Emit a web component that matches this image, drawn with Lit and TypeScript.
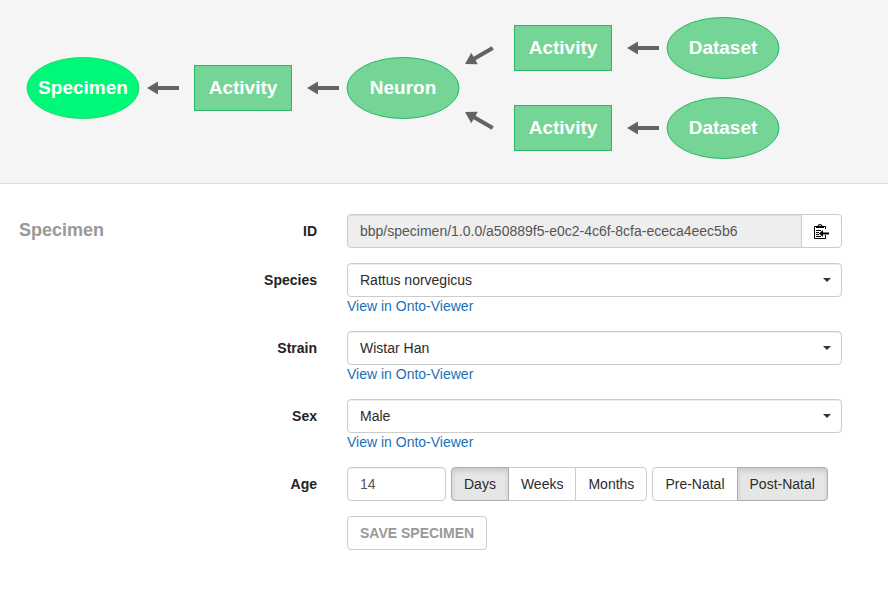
import { LitElement, html, svg, css } from "lit";
import { customElement, property, state } from "lit/decorators.js";
import { classMap } from "lit/directives/class-map.js";

interface DiagramNode {
  label: string;
  kind: "entity" | "activity";
  x: number;
  y: number;
  current?: boolean;
}

interface DiagramArrow {
  x: number;
  y: number;
  angle: number;
}

const NODES: DiagramNode[] = [
  { label: "Specimen", kind: "entity", x: 83, y: 88, current: true },
  { label: "Activity", kind: "activity", x: 243, y: 88 },
  { label: "Neuron", kind: "entity", x: 403, y: 88 },
  { label: "Activity", kind: "activity", x: 563, y: 48 },
  { label: "Dataset", kind: "entity", x: 723, y: 48 },
  { label: "Activity", kind: "activity", x: 563, y: 128 },
  { label: "Dataset", kind: "entity", x: 723, y: 128 },
];

const ARROWS: DiagramArrow[] = [
  { x: 147, y: 88, angle: 0 },
  { x: 307, y: 88, angle: 0 },
  { x: 465, y: 64, angle: -30 },
  { x: 465, y: 112, angle: 30 },
  { x: 627, y: 48, angle: 0 },
  { x: 627, y: 128, angle: 0 },
];

@customElement("provenance-diagram")
class ProvenanceDiagram extends LitElement {
  static styles = css`
    :host {
      display: block;
      background: #f5f5f5;
      border-bottom: 1px solid #ddd;
    }
    .canvas {
      display: block;
      max-width: 100%;
    }
    .shape {
      fill: #75d596;
      stroke: #2bb766;
    }
    .current {
      fill: #00f879;
      stroke: #1fdc70;
    }
    .arrow {
      fill: #636363;
    }
    .label {
      fill: #fff;
      font: bold 19px "Liberation Sans", Arial, sans-serif;
      text-anchor: middle;
    }
  `;

  private renderNode(node: DiagramNode) {
    const classes = classMap({ shape: true, current: !!node.current });
    const shape =
      node.kind === "entity"
        ? svg`<ellipse class=${classes} cx=${node.x} cy=${node.y} rx="56" ry="30.5"></ellipse>`
        : svg`<rect class=${classes} x=${node.x - 48.5} y=${node.y - 22.5} width="97" height="45"></rect>`;
    return svg`<g>${shape}<text class="label" x=${node.x} y=${node.y + 6}>${node.label}</text></g>`;
  }

  render() {
    return html`
      <svg class="canvas" width="800" height="183" viewBox="0 0 800 183" role="img" aria-label="Provenance">
        ${ARROWS.map(
          (a) => svg`<path class="arrow" d="M0 0 L11 -6.5 V-2 H32 V2 H11 V6.5 Z"
            transform="translate(${a.x} ${a.y}) rotate(${a.angle})"></path>`
        )}
        ${NODES.map((n) => this.renderNode(n))}
      </svg>
    `;
  }
}

const controls = css`
  * {
    box-sizing: border-box;
  }
  .control {
    height: 34px;
    margin: 0;
    padding: 0 12px;
    border: 1px solid #ccc;
    border-radius: 4px;
    background: #fff;
    color: #2b2b2b;
    font: 14px "Liberation Sans", Arial, sans-serif;
    outline-offset: 1px;
  }
  .inset {
    color: #555;
    box-shadow: inset 0 1px 1px rgba(0, 0, 0, 0.075);
  }
`;

@customElement("toggle-group")
class ToggleGroup extends LitElement {
  @property({ attribute: false }) options: string[] = [];
  @property() value = "";
  @property() label = "";

  static styles = [
    controls,
    css`
      :host {
        display: inline-flex;
      }
      .group {
        display: flex;
      }
      .option {
        border-radius: 0;
        cursor: pointer;
      }
      .option + .option {
        margin-left: -1px;
      }
      .option:first-child {
        border-radius: 4px 0 0 4px;
      }
      .option:last-child {
        border-radius: 0 4px 4px 0;
      }
      .active {
        z-index: 1;
        background: #e6e6e6;
        border-color: #adadad;
        box-shadow: inset 0 3px 5px rgba(0, 0, 0, 0.125);
      }
    `,
  ];

  render() {
    return html`<div class="group" role="group" aria-label=${this.label}>
      ${this.options.map(
        (o) => html`<button
          type="button"
          class=${classMap({ control: true, option: true, active: o === this.value })}
          aria-pressed=${o === this.value ? "true" : "false"}
          @click=${() => (this.value = o)}
        >${o}</button>`
      )}
    </div>`;
  }
}

const ONTOLOGY_FIELDS = [
  { id: "species", label: "Species", options: ["Rattus norvegicus"] },
  { id: "strain", label: "Strain", options: ["Wistar Han"] },
  { id: "sex", label: "Sex", options: ["Male"] },
];

@customElement("app-root")
class AppRoot extends LitElement {
  @state() private specimenId = "bbp/specimen/1.0.0/a50889f5-e0c2-4c6f-8cfa-ececa4eec5b6";

  static styles = [
    controls,
    css`
      :host {
        display: block;
        background: #fff;
        color: #222;
        font: 14px/20px "Liberation Sans", Arial, sans-serif;
      }
      .editor {
        padding: 30px 46px 40px 19px;
      }
      .title {
        grid-row: 1;
        grid-column: 1;
        margin: 0;
        color: #999;
        font-size: 18px;
        line-height: 32px;
      }
      .form {
        display: grid;
        grid-template-columns: minmax(0, 298fr) minmax(0, 495fr);
        gap: 15px 30px;
        align-items: start;
      }
      .name {
        grid-column: 1;
        justify-self: end;
        font-weight: bold;
        line-height: 34px;
      }
      .first {
        grid-row: 1;
      }
      .field {
        grid-column: 2;
        min-width: 0;
      }
      .joined {
        display: flex;
      }
      .identifier {
        flex: 1;
        min-width: 0;
        border-radius: 4px 0 0 4px;
        background: #eee;
      }
      .copy {
        display: flex;
        align-items: center;
        margin-left: -1px;
        border-radius: 0 4px 4px 0;
        color: #000;
      }
      .picker {
        position: relative;
      }
      .picker::after {
        content: "";
        position: absolute;
        top: 15px;
        right: 11px;
        border: 4px solid transparent;
        border-top-color: #333;
        border-bottom: 0;
        pointer-events: none;
      }
      .select {
        display: block;
        width: 100%;
        appearance: none;
        box-shadow: inset 0 1px 1px rgba(0, 0, 0, 0.075);
      }
      .link {
        display: table;
        color: #1a70b8;
        line-height: 19px;
        text-decoration: none;
      }
      .link:hover {
        text-decoration: underline;
      }
      .age {
        display: flex;
        flex-wrap: wrap;
        gap: 5px;
      }
      .number {
        width: 99px;
      }
      .save {
        justify-self: start;
        color: #999;
        font-weight: bold;
      }
    `,
  ];

  render() {
    return html`
      <provenance-diagram></provenance-diagram>
      <main class="editor">
        <form class="form" @submit=${(e: Event) => e.preventDefault()}>
          <h1 class="title">Specimen</h1>
          <label class="name first" for="identifier">ID</label>
          <div class="field joined">
            <input id="identifier" class="control inset identifier" readonly .value=${this.specimenId} />
            <button type="button" class="control copy" aria-label="Copy ID"
              @click=${() => navigator.clipboard?.writeText(this.specimenId)}>
              <svg width="15" height="16" viewBox="0 0 15 16" aria-hidden="true">
                <path d="M11.500 6V3.500H0.500V15.500H11.500V12" fill="none" stroke="currentColor" />
                <path fill="currentColor" fill-rule="evenodd" d="M2 5V3.500Q2 3 4 2.500Q4 1 6 1Q8 1 8 2.500Q10 3 10 3.500V5ZM3 4H9Q9 3.500 7 3.300Q7 2 6 2Q5 2 5 3.300Q3 3.500 3 4Z" />
                <path d="M2 7.500H7M2 9.500H5M2 11.500H5M2 13.500H7" stroke="currentColor" />
                <path d="M5 10.500L9 7V9.500H15V11.500H9V14Z" fill="currentColor" />
              </svg>
            </button>
          </div>
          ${ONTOLOGY_FIELDS.map(
            (f) => html`
              <label class="name" for=${f.id}>${f.label}</label>
              <div class="field">
                <div class="picker">
                  <select id=${f.id} class="control select">
                    ${f.options.map((o) => html`<option>${o}</option>`)}
                  </select>
                </div>
                <a class="link" href="#${f.id}">View in Onto-Viewer</a>
              </div>
            `
          )}
          <label class="name" for="age">Age</label>
          <div class="field age">
            <input id="age" class="control inset number" inputmode="numeric" value="14" />
            <toggle-group label="Unit" .options=${["Days", "Weeks", "Months"]} value="Days"></toggle-group>
            <toggle-group label="Period" .options=${["Pre-Natal", "Post-Natal"]} value="Post-Natal"></toggle-group>
          </div>
          <button type="submit" class="field control save">SAVE SPECIMEN</button>
        </form>
      </main>
    `;
  }
}
